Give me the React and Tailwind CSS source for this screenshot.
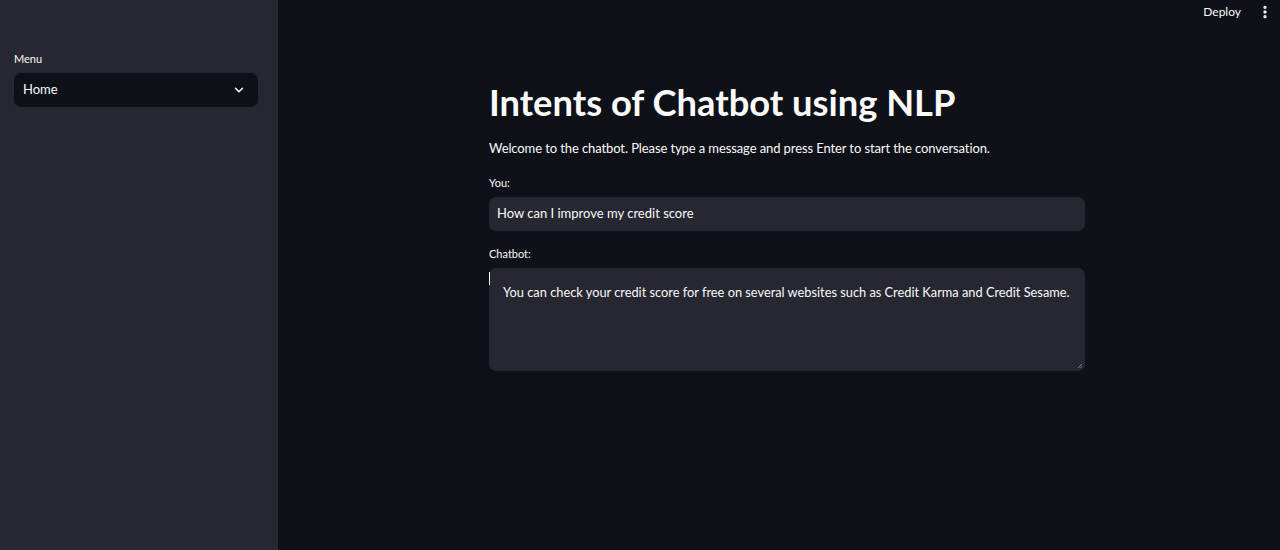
import { ChevronDown, EllipsisVertical } from "lucide-react";

const font = { fontFamily: "Lato, 'Open Sans', sans-serif" };

export default function App() {
  return (
    <div className="flex h-[550px] w-[1280px] overflow-hidden bg-[#0e1117] text-[#fafafa]" style={font}>
      {/* Sidebar */}
      <aside className="w-[278px] shrink-0 bg-[#262730] pl-[14px] pr-[20px] pt-[52px]">
        <p className="mb-[7px] text-[11px] leading-[14px] text-[#fafafa]">Menu</p>
        <div className="flex h-[34px] items-center justify-between rounded-[7px] bg-[#0e1117] pl-[9px] pr-[12px]">
          <span className="text-[13px]">Home</span>
          <ChevronDown size={14} strokeWidth={2.5} />
        </div>
      </aside>

      {/* Main */}
      <main className="relative flex-1">
        <div className="absolute right-[7px] top-[4px] flex items-center gap-[16px]">
          <span className="text-[12px] leading-[16px]">Deploy</span>
          <EllipsisVertical size={16} strokeWidth={3} />
        </div>

        <div className="ml-[211px] w-[596px] pt-[80px]">
          <h1 className="text-[36.3px] font-bold leading-[44px]">Intents of Chatbot using NLP</h1>
          <p className="mt-[14px] text-[13px] leading-[20px] tracking-[-0.1px]">
            Welcome to the chatbot. Please type a message and press Enter to start the conversation.
          </p>

          <p className="mt-[18px] text-[11px] leading-[14px]">You:</p>
          <div className="mt-[7px] flex h-[34px] items-center rounded-[7px] bg-[#262730] px-[8px] text-[13px]">
            How can I improve my credit score
          </div>

          <p className="mt-[16px] text-[11px] leading-[14px]">Chatbot:</p>
          <div className="relative mt-[7px] h-[103px] whitespace-nowrap rounded-[7px] bg-[#262730] px-[14px] pt-[15px] text-[12.8px] leading-[18px]">
            <span className="absolute left-0 top-[4px] h-[13px] w-[1px] bg-[#fafafa]" />
            You can check your credit score for free on several websites such as Credit Karma and Credit Sesame.
            <svg className="absolute bottom-[2px] right-[2px]" width="6" height="6" viewBox="0 0 6 6">
              <path d="M5 1 L1 5 M5 3.5 L3.5 5" stroke="#9a9aa0" strokeWidth="0.8" />
            </svg>
          </div>
        </div>
      </main>
    </div>
  );
}
